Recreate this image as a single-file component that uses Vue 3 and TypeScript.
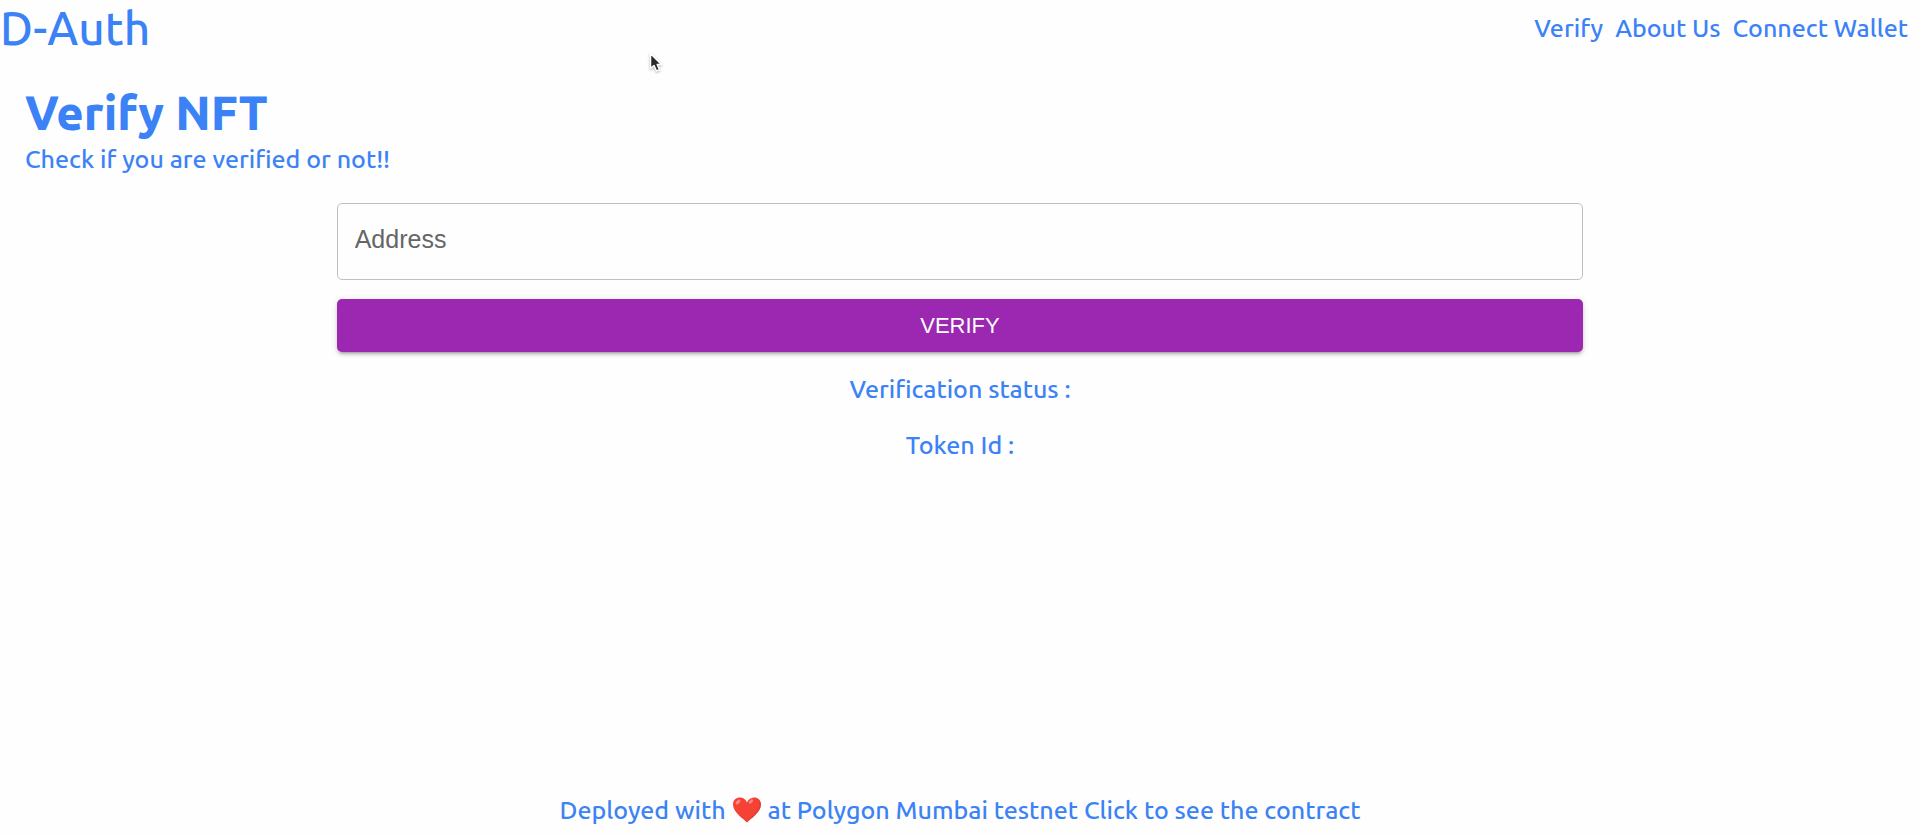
<script setup lang="ts">
import { ref } from 'vue'

interface NavLink {
  label: string
  href: string
}

const links: NavLink[] = [
  { label: 'Verify', href: '#verify' },
  { label: 'About Us', href: '#about' },
  { label: 'Connect Wallet', href: '#wallet' },
]

const address = ref('')
const status = ref('')
const tokenId = ref('')
</script>

<template>
  <div class="page">
    <header class="header">
      <a class="brand" href="#home">D-Auth</a>
      <nav class="nav">
        <a v-for="link in links" :key="link.label" :href="link.href">{{ link.label }}</a>
      </nav>
    </header>

    <main class="main">
      <h1 class="title">Verify NFT</h1>
      <p class="subtitle">Check if you are verified or not!!</p>
      <form class="form" @submit.prevent>
        <input v-model="address" class="field" type="text" placeholder="Address" aria-label="Address" />
        <button class="submit" type="submit">VERIFY</button>
      </form>
      <p class="result">Verification status : {{ status }}</p>
      <p class="result">Token Id : {{ tokenId }}</p>
    </main>

    <footer class="footer">
      <span>Deployed with</span>
      <svg class="heart" viewBox="0 0 28 26" role="img" aria-label="love">
        <path d="M14 25.5C11 22 0 15.500 0 7.500C0 3 3.200 .5 7 .5C10.300 .5 13 2.700 14 5.500C15 2.700 17.700 .5 21 .5C24.800 .5 28 3 28 7.500C28 15.500 17 22 14 25.500Z" fill="#f44336" />
        <path d="M26 3.500C27.500 8 25 15 14 24C9 20.500 5 17 3 14C6 19 12 23 14 25.500C17 22 28 15.500 28 7.500C28 5.800 27 4.300 26 3.500Z" fill="#d8352d" opacity=".5" />
        <ellipse cx="5" cy="5" rx="3" ry="1.600" transform="rotate(-48 5 5)" fill="#ff8a80" />
        <ellipse cx="18" cy="4.500" rx="2.600" ry="1.300" transform="rotate(-45 18 4.500)" fill="#ff8a80" />
      </svg>
      <a href="#contract">at Polygon Mumbai testnet Click to see the contract</a>
    </footer>

    <svg class="pointer" viewBox="0 0 14 22" aria-hidden="true">
      <path d="M1.500 1.500V16.500L5 13.500L7.500 19L10.500 17.700L8.200 12.500H12.500Z" fill="#2b2b2b" stroke="#fff" stroke-width="1.500" stroke-linejoin="round" />
    </svg>
  </div>
</template>

<style>
body {
  margin: 0;
  background: #fefefe;
}
</style>

<style scoped>
.page {
  position: relative;
  box-sizing: border-box;
  display: flex;
  flex-direction: column;
  min-height: 100vh;
  color: #3b82f6;
  font-family: Ubuntu, "Noto Sans", "Open Sans", sans-serif;
  font-size: 25px;
  font-weight: 500;
  line-height: 36px;
}

a {
  color: inherit;
  text-decoration: none;
}

.header {
  display: flex;
  align-items: center;
  justify-content: space-between;
  padding-right: 12px;
}

.brand {
  font-size: 46px;
  line-height: 56px;
}

.nav {
  display: flex;
  gap: 12px;
}

.main {
  flex: 1;
  padding: 28px 25px;
}

.title {
  margin: 0;
  font-size: 47px;
  line-height: 57px;
  font-weight: 800;
}

.subtitle {
  margin: 0;
}

.form {
  display: flex;
  flex-direction: column;
  gap: 19px;
  width: calc(100% * 2 / 3);
  margin: 26px auto 19px;
}

.field,
.submit {
  box-sizing: border-box;
  width: 100%;
  border-radius: 5px;
  font-family: "Liberation Sans", Arial, sans-serif;
}

.field {
  height: 77px;
  padding: 0 17px 4px;
  border: 1px solid #c0c0c0;
  background: transparent;
  color: #222;
  font-size: 25px;
}

.field::placeholder {
  color: #666;
  opacity: 1;
}

.submit {
  height: 53px;
  padding: 0 24px;
  border: 0;
  background: #9c27b0;
  color: #fff;
  font-size: 22px;
  box-shadow: 0 4px 2px -3px rgba(0, 0, 0, 0.2), 0 3px 3px rgba(0, 0, 0, 0.14), 0 1px 7px rgba(0, 0, 0, 0.12);
}

.result {
  margin: 0 0 20px;
  text-align: center;
}

.footer {
  display: flex;
  align-items: center;
  justify-content: center;
  gap: 7px;
  padding-bottom: 7px;
}

.heart {
  width: 28px;
  height: 26px;
}

.pointer {
  position: absolute;
  top: 52px;
  left: 649px;
  width: 14px;
  height: 22px;
  filter: drop-shadow(0 1px 1px rgba(0, 0, 0, 0.3));
  pointer-events: none;
}
</style>
